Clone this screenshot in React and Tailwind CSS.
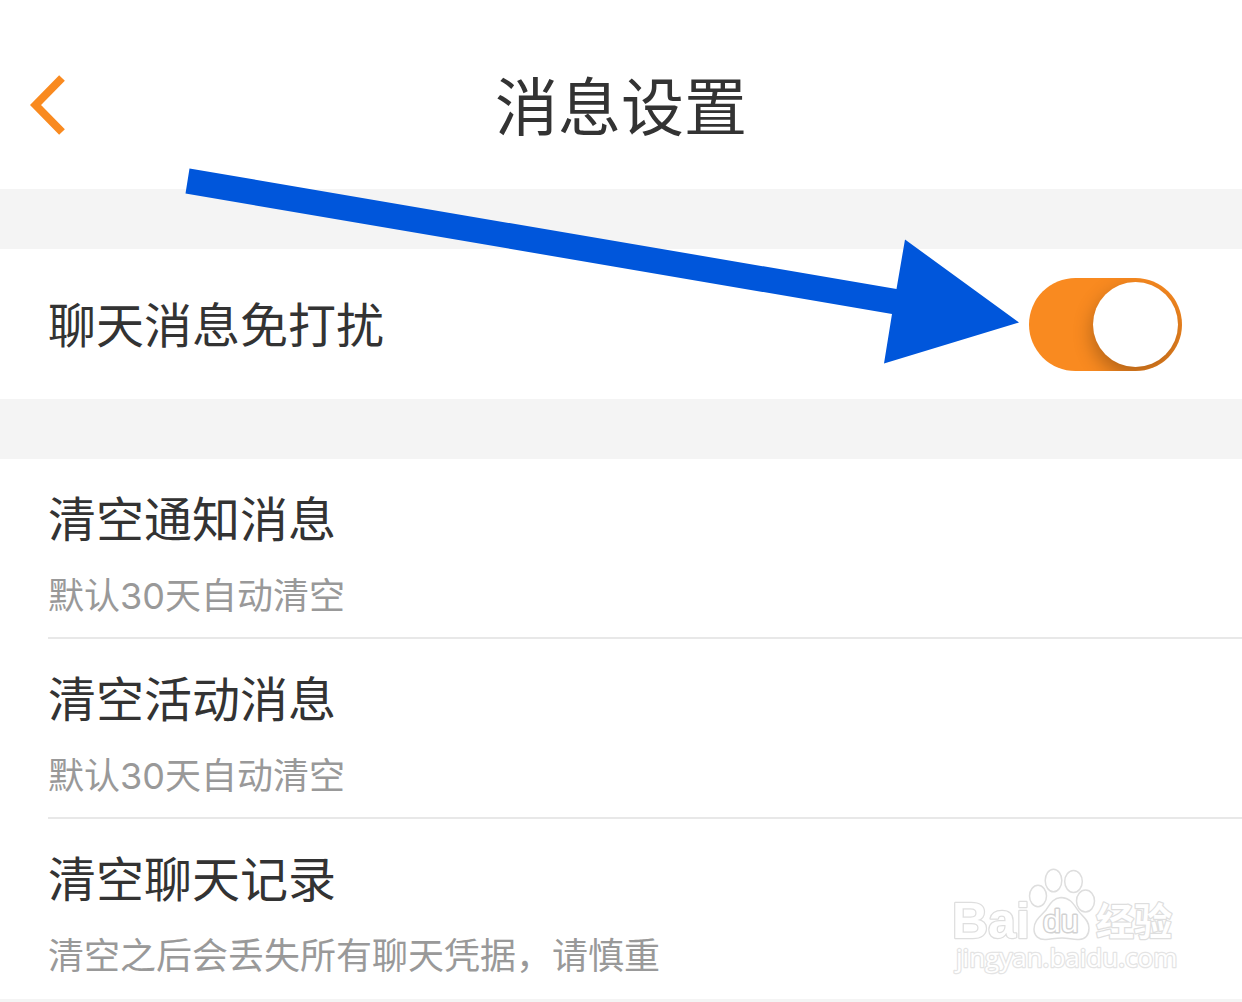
import { useState } from 'react';

const CLEAR_ITEMS = [
  { id: 'notice', title: '清空通知消息', desc: '默认30天自动清空' },
  { id: 'activity', title: '清空活动消息', desc: '默认30天自动清空' },
  { id: 'chat', title: '清空聊天记录', desc: '清空之后会丢失所有聊天凭据，请慎重' },
];

function Arrow() {
  return (
    <svg
      aria-hidden="true"
      className="pointer-events-none absolute right-[223px] bottom-[35px] h-[196px] w-[834px]"
      viewBox="185 168 834 196"
    >
      <path d="M189.500 168.500 L896.500 289 L905 239.500 L1019 322.500 L884 363.500 L892 314 L185.500 193.500 Z" fill="#0056db" />
    </svg>
  );
}

function Watermark() {
  return (
    <svg
      aria-label="Baidu 经验"
      className="pointer-events-none absolute right-[62px] bottom-[22px] h-[112px] w-[230px]"
      viewBox="950 865 230 112"
      fill="#fff"
      stroke="#dedede"
      strokeWidth="1.5"
      strokeLinejoin="round"
    >
      <text x="952" y="938" fontSize="50" fontFamily="'Liberation Sans', sans-serif" fontWeight="700" strokeWidth="2.5" paintOrder="stroke">Bai</text>
      <ellipse cx="1038" cy="896" rx="8.500" ry="10.700" />
      <ellipse cx="1053.500" cy="880.500" rx="8.300" ry="11.300" />
      <ellipse cx="1073.500" cy="881.500" rx="8.800" ry="11" />
      <ellipse cx="1085.500" cy="901" rx="9" ry="11" />
      <path d="M1061 897.500 C1053 898 1050 904 1046 910 C1041 916 1034 920 1034 929 C1034 936 1039 940 1046 939.500 C1052 939 1056 938 1062 938 C1069 938 1073 940 1079 939.500 C1086 939 1089 934 1089 928 C1089 919 1081 916 1077 909 C1073 903 1070 898 1061 897.500 Z" />
      <text x="1043" y="932" fontSize="32" fontFamily="'Liberation Sans', sans-serif" stroke="#d2d2d2" strokeWidth="3" paintOrder="stroke">du</text>
      <text x="1096" y="935" fontSize="38" fontFamily="'Noto Sans CJK SC', sans-serif" fontWeight="700" strokeWidth="2.5" paintOrder="stroke">经验</text>
      <text x="956" y="967" fontSize="26" fontFamily="'Open Sans', sans-serif" stroke="#e4e4e4" strokeWidth="2.5" paintOrder="stroke">jingyan.baidu.com</text>
    </svg>
  );
}

export default function App() {
  const [muted, setMuted] = useState(true);

  return (
    <div className="relative min-h-screen bg-[#f4f4f4] font-['Inter','Noto_Sans_CJK_SC',sans-serif] text-[#333]">
      <header className="grid h-[189px] grid-cols-[96px_1fr_96px] items-center bg-white pt-5">
        <button type="button" aria-label="返回" className="flex h-24 items-center pl-[30px]">
          <svg className="h-[60px] w-9" viewBox="0 0 36 60" fill="none" stroke="#f98a20" strokeWidth="8">
            <path d="M32 3 L5.500 30 L32 57" />
          </svg>
        </button>
        <h1 className="pt-1 text-center text-[63px] leading-[84px] font-normal">消息设置</h1>
      </header>

      <section className="relative mt-[60px] bg-white">
        <label className="flex h-[150px] items-center justify-between pr-[60px] pl-12 text-5xl">
          <span className="pt-1">聊天消息免打扰</span>
          <input
            type="checkbox"
            role="switch"
            checked={muted}
            onChange={(e) => setMuted(e.target.checked)}
            className="flex h-[93px] w-[153px] shrink-0 appearance-none overflow-hidden rounded-full bg-[#ddd] p-1 before:size-[85px] before:rounded-full before:bg-white before:shadow-[0_8px_20px_rgba(0,0,0,0.3)] checked:justify-end checked:bg-[#f98a20]"
          />
        </label>
        <Arrow />
      </section>

      <section className="relative mt-[60px] bg-white">
        <ul className="pl-12">
          {CLEAR_ITEMS.map((item) => (
            <li key={item.id} className="border-b-2 border-[#e8e8e8] last:border-transparent">
              <button type="button" className="flex h-[178px] w-full flex-col gap-6 pt-[33px] text-left">
                <span className="text-5xl leading-[56px]">{item.title}</span>
                <span className="text-4xl leading-[48px] text-[#999]">{item.desc}</span>
              </button>
            </li>
          ))}
        </ul>
        <Watermark />
      </section>
    </div>
  );
}
